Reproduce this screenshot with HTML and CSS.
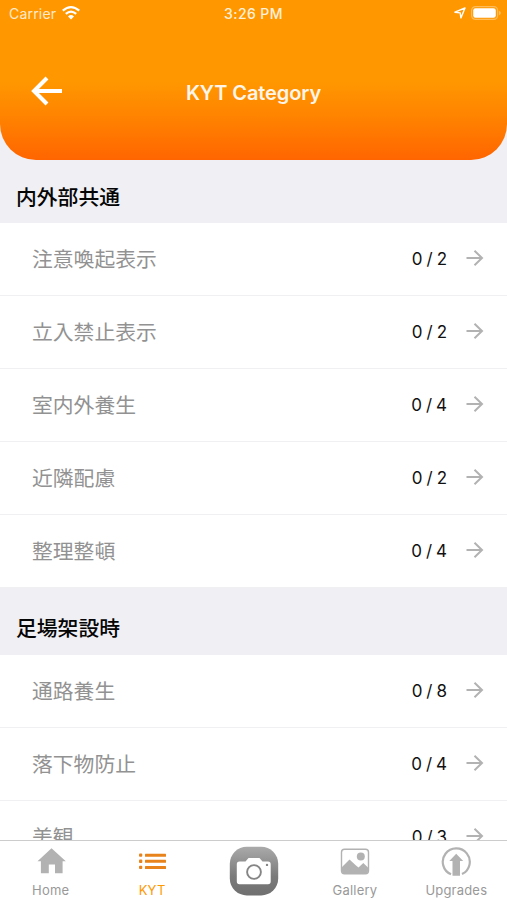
FILE: index.html
```html
<!DOCTYPE html>
<html lang="ja">
<head>
<meta charset="utf-8">
<title>KYT Category</title>
<link rel="stylesheet" href="styles.css">
</head>
<body>
<svg class="defs" width="0" height="0" aria-hidden="true">
  <symbol id="arrow" viewBox="0 0 18 18"><path d="M.5 9H16M8.5 1.7L16 9L8.5 16.3" fill="none" stroke="#b2b2b2" stroke-width="2"/></symbol>
</svg>
<div class="app">
  <header class="header">
    <div class="status">
      <div class="carrier"><span>Carrier</span>
        <svg width="18" height="14" viewBox="0 0 18 14" fill="none" stroke="#fff" stroke-width="2.2"><path d="M.8 4.7Q9-2.3 17.2 4.7M3.8 7.9Q9 3.4 14.2 7.9"/><path d="M6 10.4Q9 7.8 12 10.4L9 13.5Z" fill="#fff" stroke="none"/></svg>
      </div>
      <span class="time">3:26 PM</span>
      <div class="indicators">
        <svg width="12" height="12" viewBox="0 0 12 12" fill="none" stroke="#fff" stroke-width="1.4" stroke-linejoin="round"><path d="M.9 5.2L11 1L6.9 10.9L6.2 5.9Z"/></svg>
        <svg width="31" height="14" viewBox="0 0 31 14"><rect x=".6" y=".6" width="26" height="12.8" rx="3.8" fill="none" stroke="#fff" stroke-opacity=".35" stroke-width="1.2"/><rect x="2.2" y="2.3" width="22.6" height="9.4" rx="2.2" fill="#fff"/><path d="M28 4.8Q29.8 5.5 29.8 7T28 9.2Z" fill="#fff" fill-opacity=".4"/></svg>
      </div>
    </div>
    <div class="nav">
      <svg class="back" width="32" height="30" viewBox="0 0 32 30" fill="none" stroke="#fff" stroke-width="4"><path d="M31 15H4M16 2L3 15L16 28"/></svg>
      <h1>KYT Category</h1>
    </div>
  </header>
  <main class="list">
    <h2 class="first">内外部共通</h2>
    <ul>
      <li><span class="name">注意喚起表示</span><span class="count">0 / 2</span><svg class="go"><use href="#arrow"/></svg></li>
      <li><span class="name">立入禁止表示</span><span class="count">0 / 2</span><svg class="go"><use href="#arrow"/></svg></li>
      <li><span class="name">室内外養生</span><span class="count">0 / 4</span><svg class="go"><use href="#arrow"/></svg></li>
      <li><span class="name">近隣配慮</span><span class="count">0 / 2</span><svg class="go"><use href="#arrow"/></svg></li>
      <li><span class="name">整理整頓</span><span class="count">0 / 4</span><svg class="go"><use href="#arrow"/></svg></li>
    </ul>
    <h2>足場架設時</h2>
    <ul>
      <li><span class="name">通路養生</span><span class="count">0 / 8</span><svg class="go"><use href="#arrow"/></svg></li>
      <li><span class="name">落下物防止</span><span class="count">0 / 4</span><svg class="go"><use href="#arrow"/></svg></li>
      <li><span class="name">美観</span><span class="count">0 / 3</span><svg class="go"><use href="#arrow"/></svg></li>
    </ul>
  </main>
  <nav class="tabs">
    <a class="tab">
      <svg width="30" height="30" viewBox="0 0 30 30"><path d="M15.5 2.2L29.8 15.3H26.6V27.3H19V18.4H12.8V27.3H4.9V15.3H1.5Z" fill="#b2b2b2"/></svg>
      <span>Home</span>
    </a>
    <a class="tab active">
      <svg width="30" height="30" viewBox="0 0 30 30" fill="#e8821a"><rect x="2" y="7.5" width="3.3" height="3.3" rx="1"/><rect x="2" y="13.6" width="3.3" height="3.3" rx="1"/><rect x="2" y="19.7" width="3.3" height="3.3" rx="1"/><rect x="8" y="7.7" width="21" height="3" rx=".5"/><rect x="8" y="13.8" width="21" height="3" rx=".5"/><rect x="8" y="19.9" width="21" height="3" rx=".5"/></svg>
      <span>KYT</span>
    </a>
    <a class="tab camera">
      <svg width="50" height="50" viewBox="0 0 50 50">
        <defs><linearGradient id="shade" x1="0" y1="0" x2="0" y2="1"><stop stop-color="#aaa"/><stop offset=".6" stop-color="#7b7b7b"/><stop offset="1" stop-color="#707070"/></linearGradient></defs>
        <rect x=".8" y=".8" width="48.4" height="48.6" rx="17" fill="url(#shade)"/>
        <path d="M10.5 15.5H16.5L19.5 12H30.5L33.5 15.5H39Q41.7 15.5 41.7 18.2V35.5Q41.7 38.2 39 38.2H10.5Q7.8 38.2 7.8 35.5V18.2Q7.8 15.5 10.5 15.5Z" fill="#fff"/>
        <circle cx="25" cy="26" r="6.9" fill="none" stroke="#858585" stroke-width="1.9"/><circle cx="38" cy="18.9" r="1.2" fill="#858585"/>
      </svg>
    </a>
    <a class="tab">
      <svg width="30" height="30" viewBox="0 0 30 30"><rect x="1.5" y="3.3" width="27" height="24.5" rx="3" fill="#fff" stroke="#b2b2b2" stroke-width="1.4"/><circle cx="20.8" cy="10.4" r="4" fill="#b2b2b2"/><path d="M2 21L9.5 13.5L16 19.5L18.5 21.5L23.3 17L28 21.5V25.5Q28 27.5 26 27.5H4Q2 27.5 2 25.5Z" fill="#b2b2b2"/></svg>
      <span>Gallery</span>
    </a>
    <a class="tab">
      <svg width="30" height="30" viewBox="0 0 30 30"><path d="M10 28.3A13.5 13.5 0 1 1 21 28.1" fill="none" stroke="#b2b2b2" stroke-width="2.2"/><path d="M15.2 7.8L22.2 14.9H19V29.7H11.5V14.9H8.3Z" fill="#b2b2b2"/></svg>
      <span>Upgrades</span>
    </a>
  </nav>
</div>
</body>
</html>
```
FILE: styles.css
```css
* { box-sizing: border-box; }
body { margin: 0; font-family: Inter, "Noto Sans CJK JP", sans-serif; }
h1, h2, ul { margin: 0; padding: 0; }
ul { list-style: none; }
.defs { display: block; }
.app {
  height: 900px;
  display: flex;
  flex-direction: column;
  overflow: hidden;
  background: #efeff4;
}
.header {
  flex: none;
  height: 160px;
  border-radius: 0 0 36px 36px;
  background: linear-gradient(#ff9800 0, #ff9800 50%, #ff8400 72%, #ff6500 100%);
  color: #fff;
}
.status {
  height: 28px;
  padding: 0 6px 0 9px;
  display: grid;
  grid-template-columns: 1fr auto 1fr;
  align-items: center;
  font-size: 14px;
  line-height: 28px;
}
.carrier { display: flex; align-items: center; gap: 6px; color: #ffe9cc; letter-spacing: .2px; }
.carrier svg { margin-top: -2px; }
.time { font-weight: 500; letter-spacing: .4px; color: #fff0dc; margin-left: -3px; }
.indicators { display: flex; align-items: center; justify-content: flex-end; gap: 5px; margin-top: -2px; }
.indicators svg:last-child { margin-right: -1px; }
.nav {
  height: 126px;
  display: grid;
  grid-template-columns: 1fr auto 1fr;
  align-items: center;
  padding: 0 31px;
}
.back { margin-top: -1px; }
h1 { font-size: 20px; font-weight: 600; line-height: 26px; margin-top: 4px; letter-spacing: -.1px; color: #fff5e8; }
.list { flex: 1; min-height: 0; overflow: hidden; }
h2 {
  height: 66.4px;
  padding: 13px 16px 0;
  font-family: "Noto Sans CJK JP", sans-serif;
  font-size: 20.8px;
  font-weight: 500;
  line-height: 52px;
  color: #050505;
}
h2.first { height: 62.6px; padding-top: 10px; }
li {
  height: 73.1px;
  padding: 0 23px 2px 32px;
  display: flex;
  align-items: center;
  background: #fff;
  border-bottom: 1px solid #f0f0f2;
}
li:last-child { height: 73.4px; }
.name { flex: 1; font-family: "Noto Sans CJK JP", sans-serif; font-size: 20.8px; font-weight: 400; line-height: 30px; color: #929292; }
.count { font-size: 17px; line-height: 24px; word-spacing: -.8px; color: #111; margin: 2px 19px 0 0; }
.go { width: 18px; height: 18px; }
.tabs {
  flex: none;
  height: 60px;
  display: grid;
  grid-template-columns: repeat(5, 1fr);
  background: #fff;
  border-top: 1px solid #ccc;
}
.tab {
  display: flex;
  flex-direction: column;
  align-items: center;
  padding-top: 5px;
  font-size: 13px;
  line-height: 17px;
  letter-spacing: .2px;
  color: #999;
}
.tab span { margin-top: 6px; }
.camera { padding-left: 1px; }
.active { color: #f90; }
```
